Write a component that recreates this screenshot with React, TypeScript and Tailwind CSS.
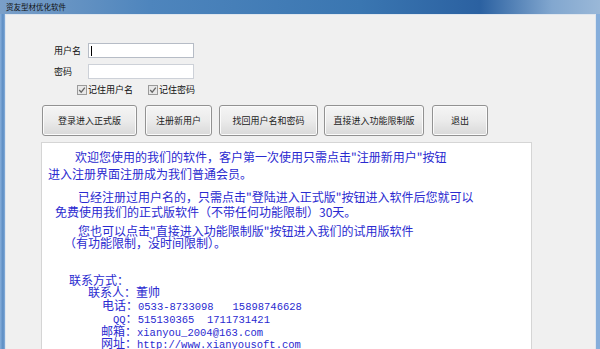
import React from 'react'

const cjk = { fontFamily: '"Noto Sans CJK SC", "Noto Sans", sans-serif' }

function Check() {
    return (
        <span className="inline-flex w-[10px] h-[10px] border border-[#9a9a9a] bg-[#e8e8e8] items-center justify-center">
            <svg width="8" height="8" viewBox="0 0 8 8">
                <path d="M1.2 4 L3.2 6.2 L6.8 1.6" fill="none" stroke="#666" strokeWidth="1.3" />
            </svg>
        </span>
    )
}

function Btn({ label, w, ml }: { label: string; w: string; ml: string }) {
    return (
        <button
            className={`${w} ${ml} h-[31px] rounded-[3px] border border-[#929292] bg-gradient-to-b from-[#f5f5f5] via-[#ebebeb] to-[#d9d9d9] text-[9px] whitespace-nowrap text-[#222] shadow-[inset_0_0_0_1px_#fbfbfb]`}
        >
            {label}
        </button>
    )
}

const mono = "font-['Liberation_Mono'] text-[10.5px] whitespace-pre"

export default function App() {
    return (
        <div
            className="w-[600px] h-[349px] overflow-hidden flex flex-col bg-[linear-gradient(90deg,#7a9fc8_0%,#4e85bd_25%,#3a76b1_60%,#2b61a1_80%,#82a7cf_92%,#9ab8d8_100%)]"
            style={cjk}
        >
            <div className="h-[17px] flex items-center pl-[6px] text-[7.5px] text-[#111]">资友型材优化软件</div>
            <div className="flex-1 flex pl-[5px] pr-[4px] bg-[linear-gradient(90deg,#86aedb_0px,#5b8cc2_3px,#86aedb_5px,#86aedb_100%)]">
                <div className="flex-1 flex flex-col bg-[#f0f0f0] border-t border-l border-r border-[#dfe6ee]">
                    <div className="flex items-center mt-[28px] h-[15px]">
                        <span className="ml-[48px] w-[34px] text-[9px] text-[#111]">用户名</span>
                        <div className="w-[106px] h-[15px] bg-white border border-[#b6bcc6] flex items-center pl-[2px]">
                            <span className="w-px h-[10px] bg-black" />
                        </div>
                    </div>
                    <div className="flex items-center mt-[6px] h-[15px]">
                        <span className="ml-[48px] w-[34px] text-[9px] text-[#111]">密码</span>
                        <div className="w-[106px] h-[15px] bg-white border border-[#cdd1d8]" />
                    </div>
                    <div className="flex items-center mt-[5px] h-[12px] text-[9px] text-[#111]">
                        <span className="ml-[71px] flex"><Check /></span>
                        <span className="ml-[1px]">记住用户名</span>
                        <span className="ml-[15px] flex"><Check /></span>
                        <span className="ml-[1px]">记住密码</span>
                    </div>
                    <div className="flex mt-[9px]">
                        <Btn label="登录进入正式版" w="w-[95px]" ml="ml-[36px]" />
                        <Btn label="注册新用户" w="w-[67px]" ml="ml-[8px]" />
                        <Btn label="找回用户名和密码" w="w-[99px]" ml="ml-[7px]" />
                        <Btn label="直接进入功能限制版" w="w-[100px]" ml="ml-[6px]" />
                        <Btn label="退出" w="w-[56px]" ml="ml-[8px]" />
                    </div>
                    <div className="ml-[35px] w-[491px] flex-1 mt-[6px] bg-white border-t border-l border-r border-[#d5d5d5] text-[12px] leading-[12px] text-[#2a2ad0]">
                        <div className="pl-[33px] mt-[8px]">欢迎您使用的我们的软件，客户第一次使用只需点击"注册新用户"按钮</div>
                        <div className="pl-[6px] mt-[5px]">进入注册界面注册成为我们普通会员。</div>
                        <div className="pl-[36px] mt-[11px]">已经注册过用户名的，只需点击"登陆进入正式版"按钮进入软件后您就可以</div>
                        <div className="pl-[13px] mt-[3px]">免费使用我们的正式版软件（不带任何功能限制）30天。</div>
                        <div className="pl-[36px] mt-[7px]">您也可以点击"直接进入功能限制版"按钮进入我们的试用版软件</div>
                        <div className="pl-[22px] mt-[0px]">（有功能限制，没时间限制）。</div>
                        <div className="pl-[27px] mt-[25px] h-[12px]">联系方式：</div>
                        <div className="pl-[46px] h-[12px]">联系人：董帅</div>
                        <div className="pl-[60px] h-[12px] mt-[1px] flex items-baseline">
                            <span>电话：</span><span className={mono}>0533-8733098   15898746628</span>
                        </div>
                        <div className="pl-[71px] h-[12px] mt-[1px] flex items-baseline">
                            <span className={mono}>QQ</span><span>：</span><span className={mono}>515130365  1711731421</span>
                        </div>
                        <div className="pl-[59px] h-[12px] mt-[1px] flex items-baseline">
                            <span>邮箱：</span><span className={mono}>xianyou_2004@163.com</span>
                        </div>
                        <div className="pl-[59px] h-[12px] flex items-baseline">
                            <span>网址：</span><span className={mono}>http://www.xianyousoft.com</span>
                        </div>
                    </div>
                </div>
            </div>
        </div>
    )
}
